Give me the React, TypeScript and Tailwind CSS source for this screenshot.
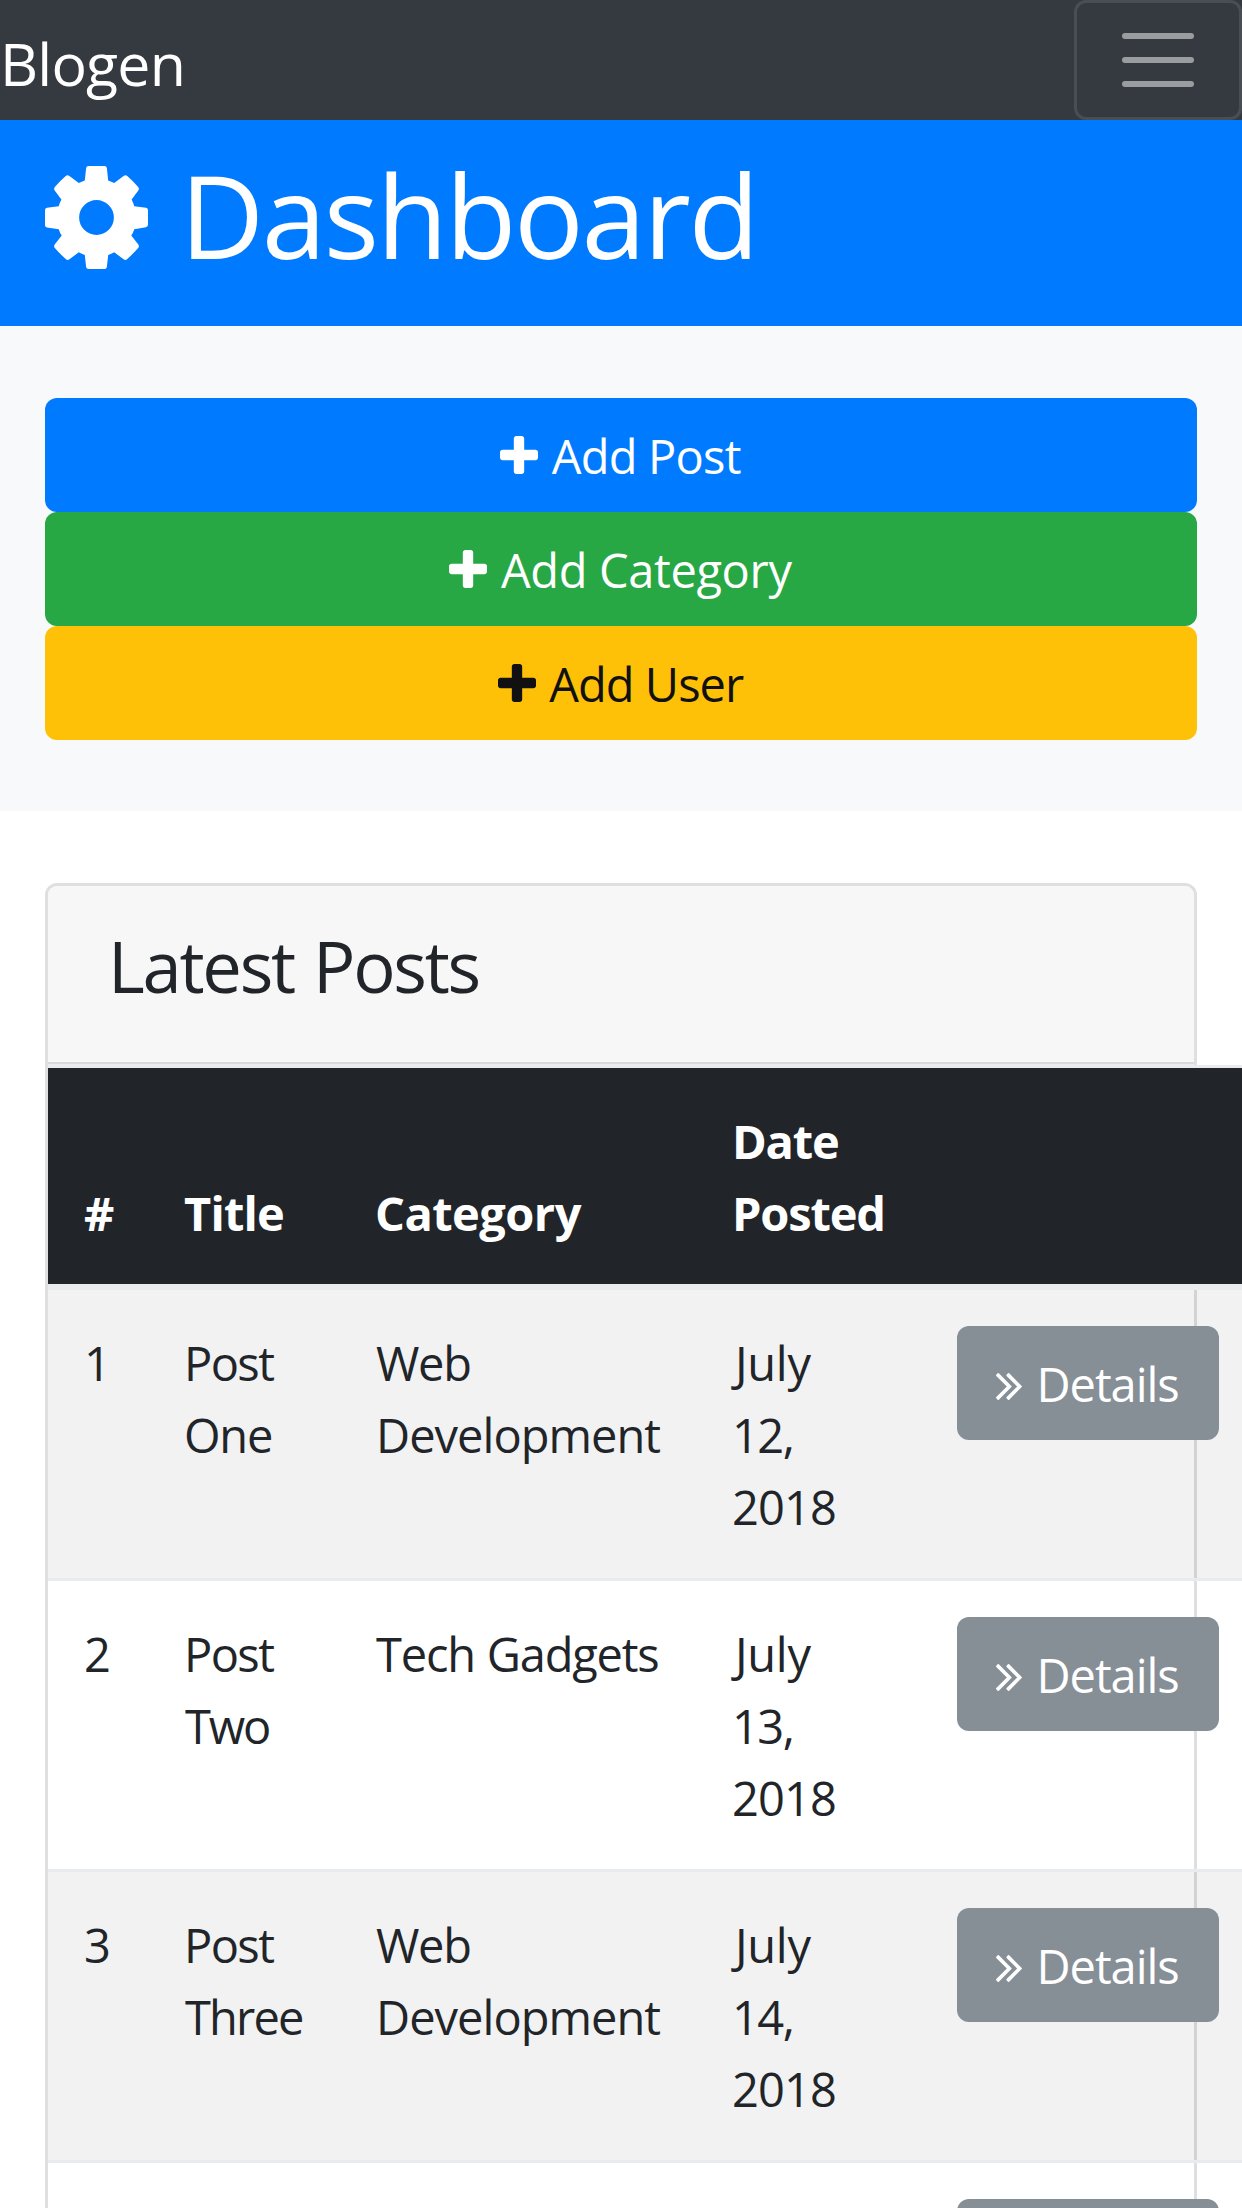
import React from "react";

type Line = { text: string; className: string };

type Post = { id: number; title: Line[]; category: Line[]; date: Line[] };

const web: Line[] = [
  { text: "Web", className: "tracking-[-1.3px]" },
  { text: "Development", className: "tracking-[-0.97px]" },
];

const tech: Line[] = [{ text: "Tech Gadgets", className: "tracking-[-1.2px] [word-spacing:1px]" }];

const july = (day: string): Line[] => [
  { text: "July", className: "pl-[3px] tracking-[-0.3px]" },
  { text: day, className: "tracking-[-1.5px]" },
  { text: "2018", className: "tracking-[-0.9px]" },
];

const postLine: Line = { text: "Post", className: "tracking-[-1.6px]" };

const posts: Post[] = [
  { id: 1, title: [postLine, { text: "One", className: "tracking-[-1.2px]" }], category: web, date: july("12,") },
  { id: 2, title: [postLine, { text: "Two", className: "pl-px tracking-[-2.2px]" }], category: tech, date: july("13,") },
  { id: 3, title: [postLine, { text: "Three", className: "pl-px tracking-[-1.84px]" }], category: web, date: july("14,") },
];

function GearIcon() {
  return (
    <svg viewBox="-154 -154 308 308" className="mt-[24px] h-[103px] w-[103px] shrink-0" fill="currentColor">
      <path
        fillRule="evenodd"
        d="M-24-154H24Q30-154 31-148L35-111Q44-108 53-103L81-124Q87-129 92-124Q109-109 124-92Q129-87 125-81L105-54Q110-44 113-34L148-29Q154-28 154-22V22Q154 28 148 29L113 35Q110 45 104 54L125 81Q129 87 124 92Q109 109 92 124Q87 129 81 125L53 104Q44 109 35 112L31 148Q30 154 24 154H-24Q-30 154-31 148L-35 112Q-44 109-53 104L-81 125Q-87 129-92 124Q-109 109-124 92Q-129 87-125 81L-104 54Q-110 45-113 35L-148 30Q-154 29-154 23V-22Q-154-28-148-29L-113-34Q-110-44-105-54L-125-81Q-129-87-124-92Q-109-109-92-124Q-87-129-81-124L-53-103Q-44-108-35-111L-31-148Q-30-154-24-154ZM0-52A52 52 0 1 0 0 52A52 52 0 1 0 0-52Z"
      />
    </svg>
  );
}

function PlusIcon() {
  return (
    <svg viewBox="192 192 1408 1408" className="mt-[16px] h-[38px] w-[38px] shrink-0" fill="currentColor">
      <path d="M1600 800v192q0 40-28 68t-68 28h-416v416q0 40-28 68t-68 28h-192q-40 0-68-28t-28-68v-416h-416q-40 0-68-28t-28-68v-192q0-40 28-68t68-28h416v-416q0-40 28-68t68-28h192q40 0 68 28t28 68v416h416q40 0 68 28t28 68z" />
    </svg>
  );
}

function DoubleAngleIcon() {
  return (
    <svg viewBox="397 461 966 998" className="mt-[25px] h-[27px] w-[26px] shrink-0" fill="currentColor">
      <path d="M979 960q0 13-10 23l-466 466q-10 10-23 10t-23-10l-50-50q-10-10-10-23t10-23l393-393-393-393q-10-10-10-23t10-23l50-50q10-10 23-10t23 10l466 466q10 10 10 23zm384 0q0 13-10 23l-466 466q-10 10-23 10t-23-10l-50-50q-10-10-10-23t10-23l393-393-393-393q-10-10-10-23t10-23l50-50q10-10 23-10t23 10l466 466q10 10 10 23z" />
    </svg>
  );
}

function ActionButton({ color, label, tracking }: { color: string; label: string; tracking: string }) {
  return (
    <button className={`flex h-[114px] w-full items-start justify-center gap-[13.5px] rounded-[12px] pt-[22.33px] pr-px ${color}`}>
      <PlusIcon />
      <span className={`whitespace-nowrap ${tracking}`}>{label}</span>
    </button>
  );
}

function Lines({ items }: { items: Line[] }) {
  return (
    <>
      {items.map((l) => (
        <div key={l.text} className={`whitespace-nowrap ${l.className}`}>
          {l.text}
        </div>
      ))}
    </>
  );
}

export default function App() {
  return (
    <div className="h-[2208px] w-full overflow-hidden bg-white text-[47px] leading-[72px] text-[#212529] [font-family:'Open_Sans','Noto_Sans',sans-serif]">
      <nav className="flex h-[120px] items-start justify-between bg-[#343a40]">
        <a className="mt-[23px] text-[59px] leading-[80px] tracking-[-0.8px] text-white">Blogen</a>
        <button
          aria-label="Toggle navigation"
          className="flex h-[120px] w-[168px] flex-col items-center justify-center gap-[18px] rounded-[12px] border-[3px] border-white/10"
        >
          <span className="h-[6px] w-[72px] rounded-full bg-white/50" />
          <span className="h-[6px] w-[72px] rounded-full bg-white/50" />
          <span className="h-[6px] w-[72px] rounded-full bg-white/50" />
        </button>
      </nav>

      <header className="flex h-[206px] items-start gap-[32px] bg-[#007bff] px-[45px] pt-[22px] text-white">
        <GearIcon />
        <h1 className="text-[116px] leading-[144px] tracking-[-2.4px]">Dashboard</h1>
      </header>

      <section className="bg-[#f8f9fa] px-[45px] pt-[71.67px] pb-[71.67px]">
        <ActionButton color="bg-[#007bff] text-white" label="Add Post" tracking="tracking-[-0.79px]" />
        <ActionButton color="bg-[#28a745] text-white" label="Add Category" tracking="tracking-[-0.35px]" />
        <ActionButton color="bg-[#ffc107] text-[#111]" label="Add User" tracking="tracking-[-0.94px]" />
      </section>

      <section className="px-[45px] pt-[72px]">
        <div className="rounded-[12px] border-[3px] border-black/[.125]">
          <div className="rounded-t-[9px] bg-[#e9ecef] pb-px">
            <div className="h-[177.67px] rounded-t-[9px] border-b-2 border-[#d9d9d9] bg-[#f7f7f7] pt-[31.67px] pl-[60px]">
              <h4 className="text-[70.5px] leading-[96px] tracking-[-2.25px] [word-spacing:3px]">Latest Posts</h4>
            </div>
          </div>
          <table className="w-[1207px] max-w-none table-fixed border-separate border-spacing-0">
            <colgroup>
              <col className="w-[100px]" />
              <col className="w-[192px]" />
              <col className="w-[356px]" />
              <col className="w-[225px]" />
              <col className="w-[334px]" />
            </colgroup>
            <thead className="bg-[#212529] text-left text-white [&_th]:border-t-[3px] [&_th]:border-b-[6px] [&_th]:border-[#e9ecef] [&_th]:pt-[37px] [&_th]:pr-0 [&_th]:pb-[35px] [&_th]:pl-[36px] [&_th]:align-bottom [&_th]:font-bold">
              <tr>
                <th>#</th>
                <th className="tracking-[-0.84px]">Title</th>
                <th>
                  <div className="-ml-px tracking-[-0.55px]">Category</div>
                </th>
                <th>
                  <div className="tracking-[-1.2px]">Date</div>
                  <div className="tracking-[-1.18px]">Posted</div>
                </th>
                <th />
              </tr>
            </thead>
            <tbody className="[&_td]:pt-[37px] [&_td]:pr-0 [&_td]:pb-[35px] [&_td]:pl-[36px] [&_td]:align-top">
              {posts.map((p, i) => (
                <tr
                  key={p.id}
                  className={`${i % 2 === 0 ? "bg-black/5" : ""} ${i > 0 ? "[&_td]:border-t-[3px] [&_td]:border-[#e9ecef]" : ""}`}
                >
                  <td>{p.id}</td>
                  <td>
                    <Lines items={p.title} />
                  </td>
                  <td>
                    <Lines items={p.category} />
                  </td>
                  <td>
                    <Lines items={p.date} />
                  </td>
                  <td>
                    <a className="-mt-px flex h-[114px] w-[262px] items-start gap-[14.5px] rounded-[12px] bg-[#868e96] pt-[22px] pl-[39px] text-white">
                      <DoubleAngleIcon />
                      <span className="tracking-[-1.05px]">Details</span>
                    </a>
                  </td>
                </tr>
              ))}
              <tr className="[&_td]:border-t-[3px] [&_td]:border-[#e9ecef]">
                <td colSpan={4} />
                <td>
                  <a aria-label="Details" className="-mt-px block h-[114px] w-[262px] rounded-[12px] bg-[#868e96]" />
                </td>
              </tr>
            </tbody>
          </table>
        </div>
      </section>
    </div>
  );
}
